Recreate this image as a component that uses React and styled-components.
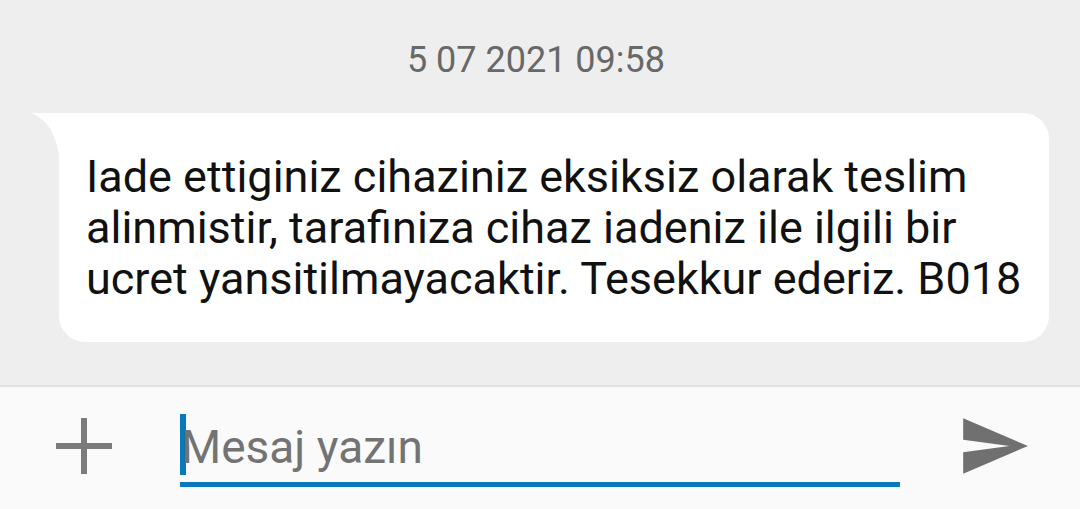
import styled, { createGlobalStyle } from "styled-components";

const GlobalStyle = createGlobalStyle`
  html, body {
    margin: 0;
    padding: 0;
    height: 100%;
  }
  body {
    font-family: Roboto, "Noto Sans", sans-serif;
    background: #eeeeee;
  }
  #root {
    height: 100%;
  }
`;

const App = () => {
  return (
    <Page>
      <GlobalStyle />
      <Stamp>5 07 2021 09:58</Stamp>
      <Thread>
        <Bubble>
          <Tail viewBox="0 0 28 47" aria-hidden="true">
            <path d="M0 0 L28.5 0 L28.5 47 C26 20 15 6 0 0 Z" fill="#ffffff" />
          </Tail>
          Iade ettiginiz cihaziniz eksiksiz olarak teslim
          <br />
          alinmistir, tarafiniza cihaz iadeniz ile ilgili bir
          <br />
          ucret yansitilmayacaktir. Tesekkur ederiz. B018
        </Bubble>
      </Thread>
      <Spacer />
      <Composer>
        <IconSlot>
          <svg width="56" height="56" viewBox="0 0 56 56" aria-hidden="true">
            <rect x="0" y="25" width="56" height="6" fill="#7b7b7b" />
            <rect x="25" y="0" width="6" height="56" fill="#7b7b7b" />
          </svg>
        </IconSlot>
        <Field>
          <Caret />
          <Placeholder>Mesaj yazın</Placeholder>
        </Field>
        <SendIcon viewBox="0 0 24 24" aria-hidden="true">
          <path d="M2.01 21L23 12 2.01 3 2 10l15 2-15 2z" fill="#707070" />
        </SendIcon>
      </Composer>
    </Page>
  );
};

const Page = styled.div`
  height: 100vh;
  display: flex;
  flex-direction: column;
  background: #eeeeee;
  overflow: hidden;
`;

const Stamp = styled.div`
  padding: 40px 8px 0 0;
  text-align: center;
  font-size: 36px;
  line-height: 41px;
  color: #686868;
`;

const Thread = styled.div`
  padding: 32px 31px 0 59px;
`;

const Bubble = styled.div`
  position: relative;
  background: #ffffff;
  border-radius: 0 26px 26px 26px;
  padding: 38px 27px 38px 27px;
  font-size: 45px;
  line-height: 51px;
  color: #111111;
  white-space: nowrap;
`;

const Tail = styled.svg`
  position: absolute;
  left: -28px;
  top: 0;
  width: 28px;
  height: 47px;
`;

const Spacer = styled.div`
  flex: 1;
`;

const Composer = styled.div`
  height: 122px;
  border-top: 2px solid #e0e0e0;
  background: #fafafa;
  display: flex;
  align-items: center;
`;

const IconSlot = styled.div`
  width: 168px;
  display: flex;
  justify-content: center;
  margin-top: -4px;
`;

const Field = styled.div`
  margin-left: 12px;
  width: 720px;
  height: 72px;
  align-self: flex-end;
  margin-bottom: 22px;
  border-bottom: 5px solid #0a78bd;
  display: flex;
  align-items: flex-start;
`;

const Caret = styled.span`
  width: 6px;
  height: 61px;
  margin-top: 4px;
  background: #0a78bd;
  flex-shrink: 0;
`;

const Placeholder = styled.span`
  margin-left: -5px;
  margin-top: 10px;
  font-size: 46px;
  line-height: 54px;
  color: #737373;
`;

const SendIcon = styled.svg`
  width: 74px;
  height: 74px;
  margin-left: 57px;
  margin-top: -4px;
`;

export default App;
